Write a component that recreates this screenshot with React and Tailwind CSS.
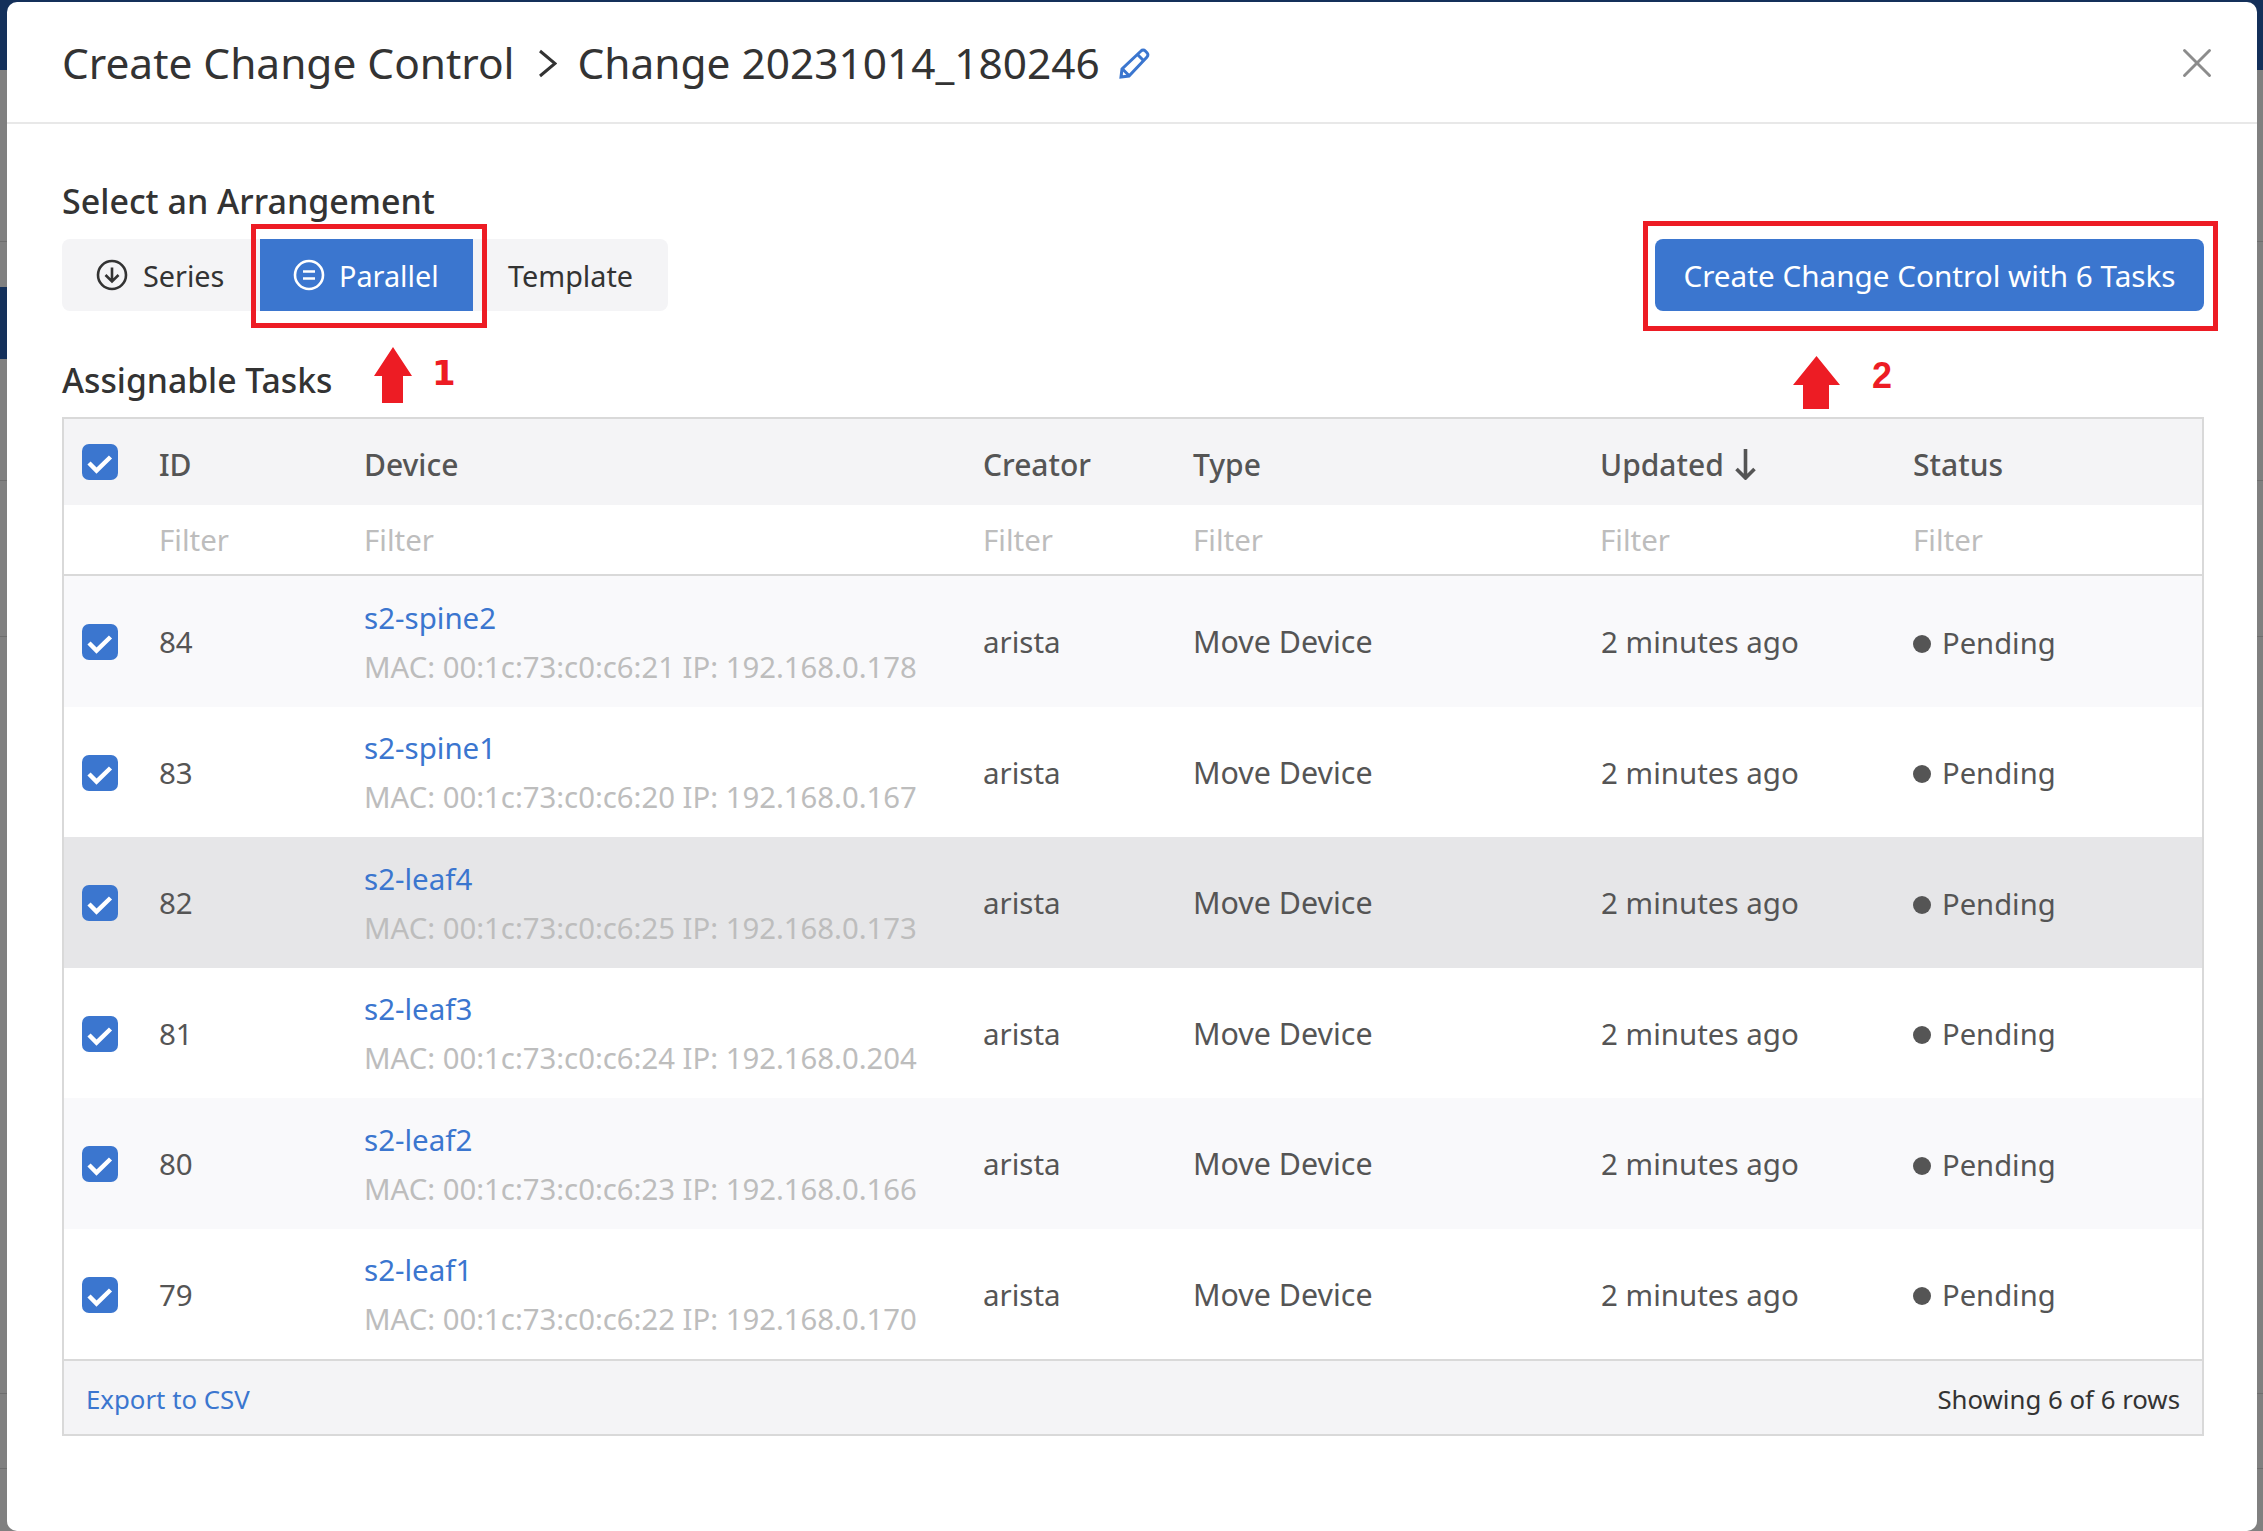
import React from 'react';
import { X } from 'lucide-react';

const tasks = [
  { id: 84, device: 's2-spine2', mac: '00:1c:73:c0:c6:21', ip: '192.168.0.178' },
  { id: 83, device: 's2-spine1', mac: '00:1c:73:c0:c6:20', ip: '192.168.0.167' },
  { id: 82, device: 's2-leaf4', mac: '00:1c:73:c0:c6:25', ip: '192.168.0.173', hover: true },
  { id: 81, device: 's2-leaf3', mac: '00:1c:73:c0:c6:24', ip: '192.168.0.204' },
  { id: 80, device: 's2-leaf2', mac: '00:1c:73:c0:c6:23', ip: '192.168.0.166' },
  { id: 79, device: 's2-leaf1', mac: '00:1c:73:c0:c6:22', ip: '192.168.0.170' },
];

const cols = 'grid grid-cols-[95px_205px_619px_210px_407px_313px_1fr]';

function Checkbox() {
  return (
    <div className="ml-[18px] h-9 w-9 rounded-[7px] bg-[#3b76cf]">
      <svg viewBox="0 0 36 36" className="h-9 w-9" fill="none" stroke="white" strokeWidth="4.5">
        <path d="M7 19l7.5 7.5L28.5 13" />
      </svg>
    </div>
  );
}

export default function App() {
  return (
    <div className="relative h-[1531px] w-[2263px] overflow-hidden bg-[#808080] pl-[7px] pr-[6px] pt-[2px] font-['Noto_Sans',sans-serif] text-[29.5px] text-[#555]">
      {/* dimmed page behind the dialog */}
      <div className="absolute inset-x-0 top-0 h-[70px] bg-[#14305a]" />
      <div className="absolute left-0 top-[287px] h-[72px] w-[7px] bg-[#14305a]" />
      <div className="absolute inset-x-0 top-[241px] h-px bg-[#6e6e6e]" />
      <div className="absolute inset-x-0 top-[480px] h-px bg-[#6e6e6e]" />
      <div className="absolute inset-x-0 top-[636px] h-px bg-[#6e6e6e]" />
      <div className="absolute inset-x-0 top-[1393px] h-px bg-[#6e6e6e]" />
      <div className="absolute inset-x-0 top-[1468px] h-px bg-[#6e6e6e]" />

      <div className="relative h-[1529px] rounded-[10px] bg-white">
        {/* header */}
        <div className="flex h-[122px] items-center border-b-2 border-[#e8e8e8] pl-[55px] pr-[35px] pt-[2px] text-[42.400px] text-[#333]">
          <span>Create Change Control</span>
          <svg viewBox="0 0 19 29" className="ml-[23px] mr-[21px] h-[29px] w-[19px]" fill="none" stroke="currentColor" strokeWidth="3">
            <path d="M2 2l15 12.500L2 27" />
          </svg>
          <span>Change 20231014_180246</span>
          <svg viewBox="0 0 32 32" className="ml-[19px] h-8 w-8" fill="none" stroke="#3b76cf" strokeWidth="3">
            <path d="M22 4a3 3 0 0 1 4.300 0l1.700 1.700a3 3 0 0 1 0 4.300L10 29l-8 1 1-8z" />
            <path d="M18.500 7.500l6 6M3.500 22l6.500 6.500" />
          </svg>
          <X className="ml-auto h-[50px] w-[50px] text-[#8c8c8c]" strokeWidth={1.4} />
        </div>

        {/* body */}
        <div className="pl-[55px] pr-[53px]">
          <div className="mt-[52px] text-[34px] font-medium leading-[50px] text-[#333]">Select an Arrangement</div>
          <div className="mt-[13px] flex items-center justify-between">
            <div className="flex h-[72px] w-[606px] items-center rounded-[8px] bg-[#f4f4f6] text-[28.800px] text-[#333]">
              <div className="flex w-[198px] items-center pl-[34px]">
                <svg viewBox="0 0 32 32" className="h-8 w-8" fill="none" stroke="currentColor" strokeWidth="2.6">
                  <circle cx="16" cy="16" r="14" />
                  <path d="M16 8.500v14M9.500 16l6.500 6.500 6.500-6.500" />
                </svg>
                <span className="ml-[15px] pt-[2px]">Series</span>
              </div>
              <div className="relative flex h-[72px] w-[213px] items-center bg-[#3b76cf] pl-[33px] text-white">
                <svg viewBox="0 0 32 32" className="h-8 w-8" fill="none" stroke="currentColor" strokeWidth="2.6">
                  <circle cx="16" cy="16" r="14" />
                  <path d="M10 12.500h12M10 19.500h12" />
                </svg>
                <span className="ml-[14px] pt-[2px]">Parallel</span>
                <div className="absolute -left-[9px] -top-[15px] h-[104px] w-[236px] border-[5px] border-[#ed1c24]" />
              </div>
              <span className="ml-[35px] pt-[2px]">Template</span>
            </div>
            <div className="relative flex h-[72px] w-[549px] items-center justify-center rounded-[8px] bg-[#3b76cf] pt-[2px] text-[29.700px] text-white">
              Create Change Control with 6 Tasks
              <div className="absolute -left-[12px] -top-[18px] h-[110px] w-[575px] border-[5px] border-[#ed1c24]" />
            </div>
          </div>
          <div className="mt-[44px] text-[33.700px] font-medium leading-[50px] text-[#333]">Assignable Tasks</div>

          {/* table */}
          <div className="mt-[12px] border-2 border-[#d9d9d9]">
            <div className={`${cols} h-[86px] items-center bg-[#f4f4f6] text-[30px] font-medium text-[#555] [&>span]:pt-[5px]`}>
              <Checkbox />
              <span>ID</span>
              <span>Device</span>
              <span>Creator</span>
              <span>Type</span>
              <span className="flex items-center">
                Updated
                <svg viewBox="0 0 21 31" className="ml-[11px] h-[31px] w-[21px]" fill="none" stroke="currentColor" strokeWidth="3.6">
                  <path d="M10.500 0v29M1.500 20l9 9 9-9" />
                </svg>
              </span>
              <span>Status</span>
            </div>
            <div className={`${cols} h-[71px] items-center border-b-2 border-[#d9d9d9] pt-[2px] text-[#bdbdbd]`}>
              <span />
              <span>Filter</span>
              <span>Filter</span>
              <span>Filter</span>
              <span>Filter</span>
              <span>Filter</span>
              <span>Filter</span>
            </div>
            {tasks.map((task, index) => (
              <div
                key={task.id}
                className={`${cols} h-[130.5px] items-center pt-[2px] ${task.hover ? 'bg-[#e6e6e8]' : index % 2 === 0 ? 'bg-[#f9f9fb]' : 'bg-white'}`}
              >
                <Checkbox />
                <span>{task.id}</span>
                <div className="flex flex-col gap-[9px] leading-[40px]">
                  <span className="text-[#3b76cf]">{task.device}</span>
                  <span className="text-[29.300px] text-[#bdbdbd]">MAC: {task.mac} IP: {task.ip}</span>
                </div>
                <span>arista</span>
                <span className="text-[30.400px]">Move Device</span>
                <span className="ml-[1px]">2 minutes ago</span>
                <span className="mt-[3px] flex items-center text-[29.200px]">
                  <span className="mr-[11px] h-[18px] w-[18px] rounded-full bg-[#555]" />
                  Pending
                </span>
              </div>
            ))}
            <div className="flex h-[75px] items-center justify-between border-t-2 border-[#d9d9d9] bg-[#f4f4f6] px-[22px] pt-[3px] text-[25.800px]">
              <span className="text-[#3b76cf]">Export to CSV</span>
              <span className="text-[#333]">Showing 6 of 6 rows</span>
            </div>
          </div>
        </div>

        {/* callout arrows */}
        <div className="absolute left-[367px] top-[345px] flex items-center">
          <svg viewBox="0 0 38 56" className="h-[56px] w-[38px]" fill="#ed1c24">
            <path d="M19 0L38 29H29V56H8V29H0Z" />
          </svg>
          <span className="mb-[5px] ml-[20px] font-['DejaVu_Sans',sans-serif] text-[34px] font-bold leading-none text-[#ed1c24]">1</span>
        </div>
        <div className="absolute left-[1786px] top-[354px] flex items-center">
          <svg viewBox="0 0 47 53" className="h-[53px] w-[47px]" fill="#ed1c24">
            <path d="M23.500 0L47 29H36V53H10V29H0Z" />
          </svg>
          <span className="mb-[13px] ml-[32px] font-['Liberation_Sans',sans-serif] text-[36px] font-bold leading-none text-[#ed1c24]">2</span>
        </div>
      </div>
    </div>
  );
}
